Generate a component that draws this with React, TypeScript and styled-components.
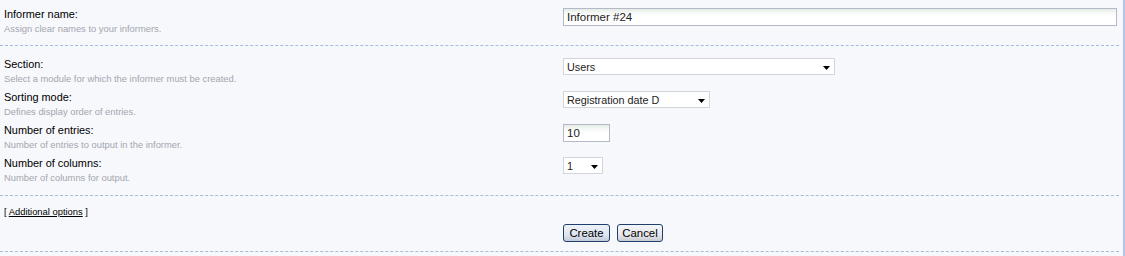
import React from "react";
import styled, { createGlobalStyle } from "styled-components";

const GlobalStyle = createGlobalStyle`
  html, body {
    margin: 0;
    padding: 0;
    background: #f7f8fc;
  }
  body {
    font-family: "Liberation Sans", Arial, sans-serif;
    color: #000;
  }
`;

const Page = styled.div`
  width: 1125px;
  height: 256px;
  box-sizing: border-box;
  border-right: 2px solid #afc5ea;
  background: #f7f8fc;
  overflow: hidden;
`;

const Section = styled.div<{ $pt: number; $pb: number }>`
  margin-right: 4px;
  padding-top: ${(p) => p.$pt}px;
  padding-bottom: ${(p) => p.$pb}px;
  border-bottom: 1px dashed #a6bbdc;
`;

const Row = styled.div<{ $h?: number }>`
  display: grid;
  grid-template-columns: 563px 1fr;
  align-items: start;
  height: ${(p) => (p.$h ? `${p.$h}px` : "auto")};
`;

const LabelCell = styled.div`
  padding-left: 4px;
  display: flex;
  flex-direction: column;
`;

const Label = styled.div`
  font-size: 10.9px;
  line-height: 15px;
  color: #000;
`;

const Hint = styled.div`
  font-size: 9.4px;
  line-height: 14px;
  color: #a2a6ae;
`;

const FieldCell = styled.div`
  padding-top: 1px;
  display: flex;
  gap: 7px;
`;

const TextInput = styled.input<{ $w: number }>`
  box-sizing: border-box;
  width: ${(p) => p.$w}px;
  height: 18px;
  margin: 0;
  padding: 0 3px;
  border: 1px solid #b5b8c8;
  background: linear-gradient(#e4ebe4 0px, #f7faf7 4px, #ffffff 8px);
  font-family: "Liberation Sans", Arial, sans-serif;
  font-size: 11.5px;
  color: #222;
  outline: none;
`;

const SelectBox = styled.div<{ $w: number }>`
  box-sizing: border-box;
  width: ${(p) => p.$w}px;
  height: 17px;
  border: 1px solid #d2d5dc;
  background: #fff;
  display: flex;
  align-items: center;
  justify-content: space-between;
  padding: 0 4px 0 3px;
  font-size: 10.8px;
  color: #222;
`;

const Arrow = styled.svg`
  width: 7px;
  height: 4px;
  margin-top: 2px;
  flex: none;
`;

const OptionsLine = styled.div`
  padding-left: 4px;
  font-size: 9.4px;
  line-height: 14px;
  color: #000;
  height: 18px;
`;

const OptionsLink = styled.a`
  color: #000;
  text-decoration: underline;
  cursor: pointer;
`;

const Button = styled.button<{ $primary?: boolean; $w: number }>`
  box-sizing: border-box;
  width: ${(p) => p.$w}px;
  height: 18px;
  padding: 0;
  margin: 0;
  border: 1px solid #1f3f6e;
  border-radius: 3px;
  background: ${(p) =>
    p.$primary
      ? "linear-gradient(#eef2f8 0%, #dfe6f1 60%, #c3cbd8 100%)"
      : "linear-gradient(#f4f5f7 0%, #e6e8ec 60%, #c9ccd2 100%)"};
  font-family: "Liberation Sans", Arial, sans-serif;
  font-size: 11.4px;
  color: #000;
  line-height: 16px;
  text-align: center;
`;

const Select = ({ w, value }: { w: number; value: string }) => (
  <SelectBox $w={w}>
    <span>{value}</span>
    <Arrow viewBox="0 0 7 4">
      <path d="M0 0 H7 L3.5 4 Z" fill="#000" />
    </Arrow>
  </SelectBox>
);

const Field = ({ label, hint, children }: { label: string; hint: string; children: React.ReactNode }) => (
  <Row $h={33}>
    <LabelCell>
      <Label>{label}</Label>
      <Hint>{hint}</Hint>
    </LabelCell>
    <FieldCell>{children}</FieldCell>
  </Row>
);

export default function App() {
  return (
    <>
      <GlobalStyle />
      <Page>
        <Section $pt={7} $pb={8}>
          <Row $h={30}>
            <LabelCell>
              <Label>Informer name:</Label>
              <Hint>Assign clear names to your informers.</Hint>
            </LabelCell>
            <FieldCell>
              <TextInput $w={554} defaultValue="Informer #24" />
            </FieldCell>
          </Row>
        </Section>
        <Section $pt={11} $pb={6}>
          <Field label="Section:" hint="Select a module for which the informer must be created.">
            <Select w={272} value="Users" />
          </Field>
          <Field label="Sorting mode:" hint="Defines display order of entries.">
            <Select w={147} value="Registration date D" />
          </Field>
          <Field label="Number of entries:" hint="Number of entries to output in the informer.">
            <TextInput $w={47} defaultValue="10" />
          </Field>
          <Field label="Number of columns:" hint="Number of columns for output.">
            <Select w={40} value="1" />
          </Field>
        </Section>
        <Section $pt={9} $pb={9}>
          <OptionsLine>
            [ <OptionsLink>Additional options</OptionsLink> ]
          </OptionsLine>
          <Row>
            <div />
            <FieldCell>
              <Button $primary $w={47}>Create</Button>
              <Button $w={46}>Cancel</Button>
            </FieldCell>
          </Row>
        </Section>
      </Page>
    </>
  );
}
